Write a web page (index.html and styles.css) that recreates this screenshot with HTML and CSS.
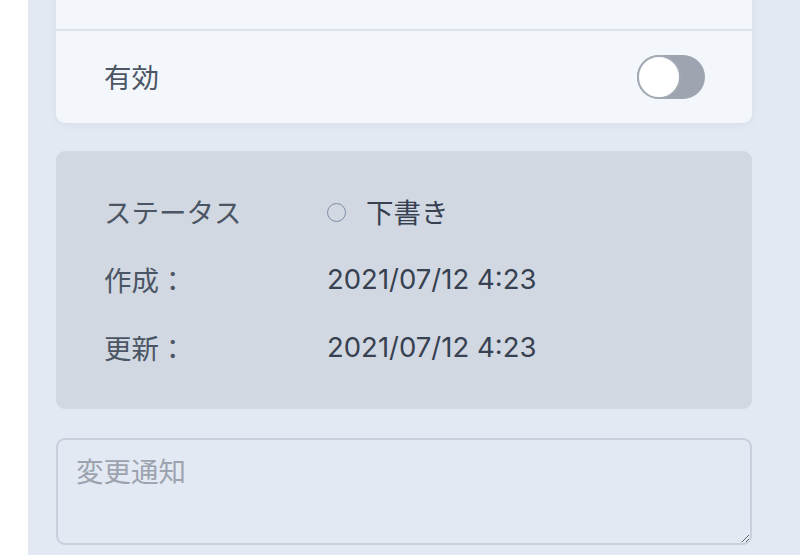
FILE: index.html
```html
<!DOCTYPE html>
<html lang="ja">
<head>
<meta charset="utf-8">
<link rel="stylesheet" href="styles.css">
</head>
<body>
<div class="strip"></div>
<main class="main">
  <section class="card">
    <div class="card-row card-row-top"></div>
    <div class="card-row">
      <span class="label">有効</span>
      <span class="toggle"><span class="knob"></span></span>
    </div>
  </section>
  <section class="panel">
    <div class="info-row">
      <span class="info-label">ステータス</span>
      <span class="info-value"><span class="dot"></span>下書き</span>
    </div>
    <div class="info-row">
      <span class="info-label">作成：</span>
      <span class="info-value">2021/07/12 4:23</span>
    </div>
    <div class="info-row">
      <span class="info-label">更新：</span>
      <span class="info-value">2021/07/12 4:23</span>
    </div>
  </section>
  <textarea class="notice" placeholder="変更通知"></textarea>
</main>
</body>
</html>
```
FILE: styles.css
```css
html, body {
  margin: 0;
  height: 100%;
  overflow: hidden;
}
body {
  display: flex;
  font-family: Inter, "Noto Sans CJK JP", sans-serif;
  font-size: 27.5px;
  color: #4b5563;
  background: #ffffff;
}
.strip {
  width: 28px;
  flex: none;
  background: #ffffff;
}
.main {
  flex: 1;
  background: #e3e9f2;
  padding: 0 48px 0 28px;
  display: flex;
  flex-direction: column;
}
.card {
  margin-top: -60px;
  background: #f3f6fb;
  border-radius: 9px;
  box-shadow: 0 2px 6px rgba(120, 140, 170, 0.12);
  flex: none;
}
.card-row {
  height: 92px;
  box-sizing: border-box;
  display: flex;
  align-items: center;
  justify-content: space-between;
  padding: 0 47px 0 48px;
}
.card-row-top {
  height: 91px;
  border-bottom: 2px solid #dde3eb;
}
.label {
  color: #4b5563;
  padding-bottom: 2px;
}
.toggle {
  width: 68px;
  height: 44px;
  border-radius: 22px;
  background: #9ea5b0;
  display: flex;
  align-items: center;
  box-sizing: border-box;
  flex: none;
}
.knob {
  width: 44px;
  height: 44px;
  flex: none;
  border-radius: 50%;
  background: #ffffff;
  border: 2px solid #a3aab4;
  box-sizing: border-box;
}
.panel {
  margin-top: 28px;
  background: #d1d8e2;
  border-radius: 9px;
  padding: 26px 48px 28px;
  flex: none;
}
.info-row {
  height: 68px;
  display: flex;
  align-items: center;
}
.info-label {
  width: 223px;
  flex: none;
  color: #4b5563;
}
.info-value {
  color: #374151;
  display: flex;
  align-items: center;
}
.dot {
  width: 19px;
  height: 19px;
  flex: none;
  box-sizing: border-box;
  border: 1.8px solid #7f8fa9;
  border-radius: 50%;
  margin: 2px 20px 0 0;
}
.notice {
  margin-top: 29px;
  height: 107px;
  flex: none;
  box-sizing: border-box;
  background: #e3e9f2;
  border: 2px solid #c8d0dc;
  border-radius: 9px;
  padding: 10px 18px;
  font-family: Inter, "Noto Sans CJK JP", sans-serif;
  font-size: 27.5px;
  color: #374151;
  resize: vertical;
  outline: none;
}
.notice::placeholder {
  color: #9ca3af;
}
```
